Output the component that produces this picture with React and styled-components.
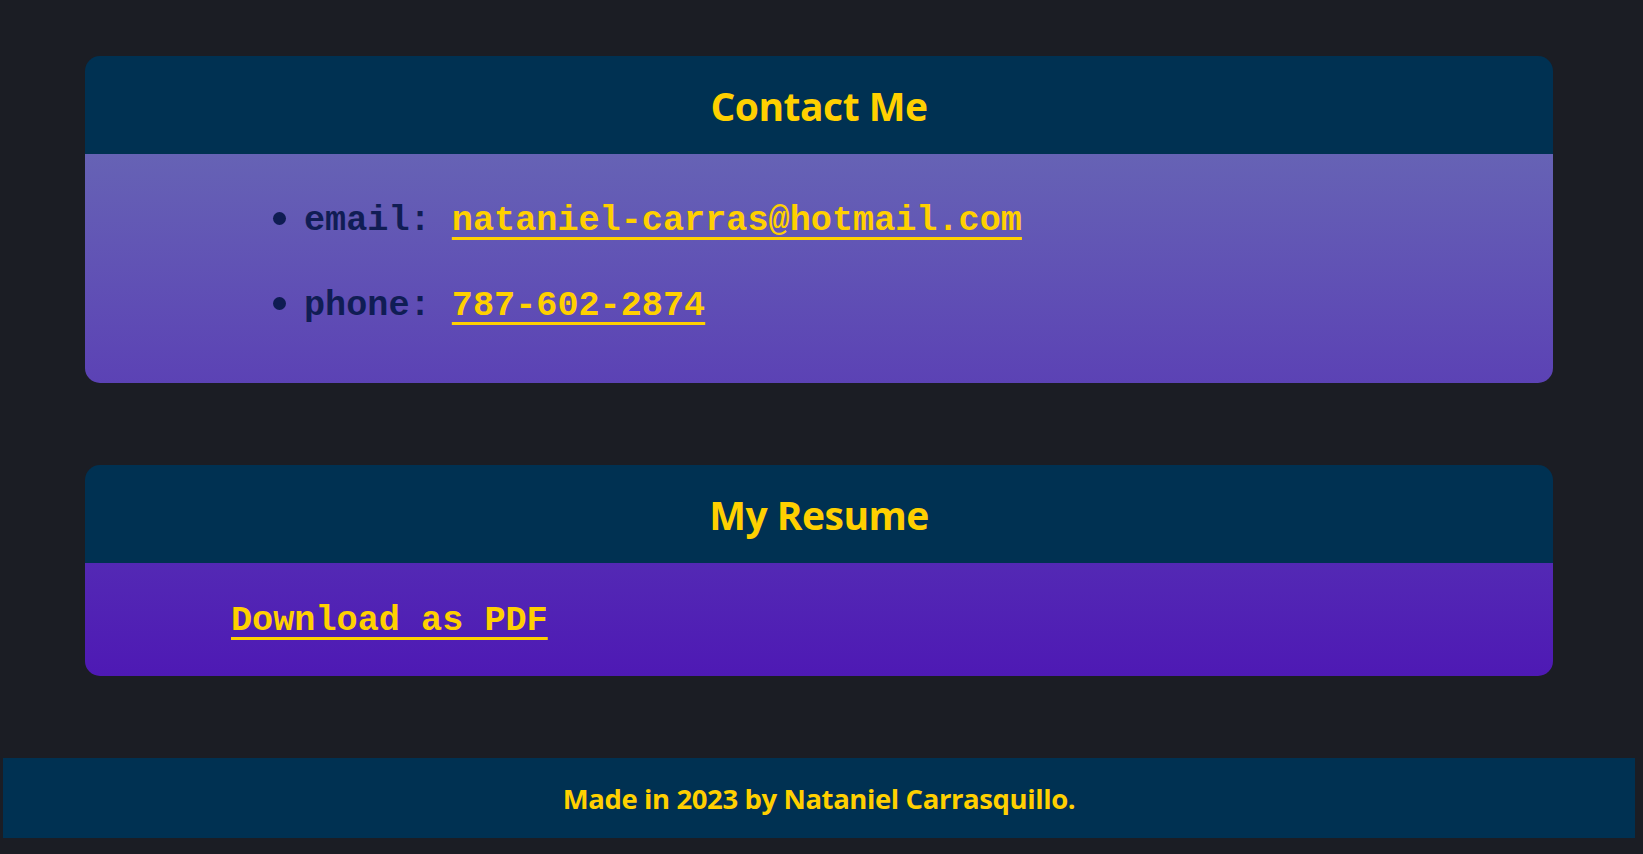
import React from "react";
import styled, { createGlobalStyle } from "styled-components";

const GlobalStyle = createGlobalStyle`
  html, body {
    margin: 0;
    padding: 0;
    background: #1b1d24;
  }
  body {
    font-family: "Open Sans", "Noto Sans", sans-serif;
  }
`;

const Page = styled.div`
  display: flex;
  flex-direction: column;
  padding-top: 56px;
  padding-bottom: 16px;
  gap: 82px;
`;

const Card = styled.section`
  width: 1468px;
  margin-left: 85px;
  border-radius: 15px;
  overflow: hidden;
`;

const CardHeader = styled.header`
  height: 98px;
  background: #003152;
  display: flex;
  align-items: center;
  justify-content: center;
`;

const Title = styled.h2`
  margin: 0;
  font-family: "Open Sans", sans-serif;
  font-weight: 700;
  font-size: 39px;
  letter-spacing: -0.5px;
  color: #ffd000;
`;

const CardBody = styled.div`
  background: linear-gradient(180deg, #6d78b5 0%, #4600b4 100%);
  background-attachment: fixed;
  padding: ${(p) => p.$pad};
  font-family: "Courier New", "Nimbus Mono PS", "FreeMono", "Liberation Mono", monospace;
  font-weight: 700;
  font-size: 35.2px;
`;

const List = styled.ul`
  margin: 0;
  padding: 0 0 0 73px;
  list-style: none;
  color: #0f1c52;
`;

const Item = styled.li`
  position: relative;
  line-height: 85px;
  &::before {
    content: "";
    position: absolute;
    left: -31px;
    top: 33px;
    width: 13px;
    height: 13px;
    border-radius: 50%;
    background: #0f1c52;
  }
`;

const Label = styled.span`
  color: #101d54;
`;

const Link = styled.a`
  color: #ffd000;
  text-decoration: underline;
  text-decoration-thickness: 3px;
  text-underline-offset: 7px;
  line-height: 85px;
`;

const Footer = styled.footer`
  width: 1632px;
  margin-left: 3px;
  height: 80px;
  background: #003152;
  display: flex;
  align-items: center;
  justify-content: center;
`;

const FooterText = styled.p`
  margin: 0;
  font-family: "Open Sans", sans-serif;
  font-weight: 700;
  font-size: 27.5px;
  letter-spacing: -0.4px;
  color: #ffd000;
`;

export default function App() {
  return (
    <>
      <GlobalStyle />
      <Page>
        <Card>
          <CardHeader>
            <Title>Contact Me</Title>
          </CardHeader>
          <CardBody $pad="25px 0 34px 146px">
            <List>
              <Item>
                <Label>email: </Label>
                <Link href="mailto:nataniel-carras@hotmail.com">nataniel-carras@hotmail.com</Link>
              </Item>
              <Item>
                <Label>phone: </Label>
                <Link href="tel:787-602-2874">787-602-2874</Link>
              </Item>
            </List>
          </CardBody>
        </Card>
        <Card>
          <CardHeader>
            <Title>My Resume</Title>
          </CardHeader>
          <CardBody $pad="16px 0 12px 146px">
            <Link href="#">Download as PDF</Link>
          </CardBody>
        </Card>
        <Footer>
          <FooterText>Made in 2023 by Nataniel Carrasquillo.</FooterText>
        </Footer>
      </Page>
    </>
  );
}
